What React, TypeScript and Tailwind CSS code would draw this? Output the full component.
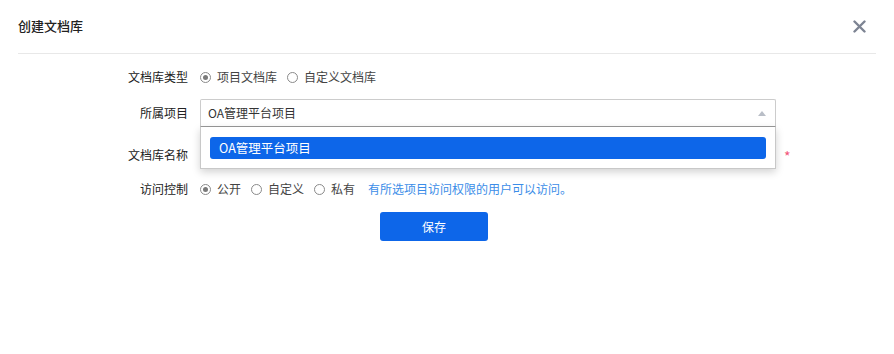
import { useState } from 'react';

const FONT = "font-['Noto_Sans_CJK_SC',sans-serif]";

function Radio({ checked }: { checked?: boolean }) {
  return (
    <span className="w-[11px] h-[11px] rounded-full border border-[#8a8a8a] bg-white flex items-center justify-center shrink-0">
      {checked && <span className="w-[5px] h-[5px] rounded-full bg-[#7a7a7a]" />}
    </span>
  );
}

function RadioItem({ label, checked }: { label: string; checked?: boolean }) {
  return (
    <label className="flex items-center gap-[6px] mr-[10px]">
      <Radio checked={checked} />
      <span>{label}</span>
    </label>
  );
}

function Row({ label, children, className = '' }: { label: string; children: React.ReactNode; className?: string }) {
  return (
    <div className={`flex items-center ${className}`}>
      <div className="w-[188px] text-right text-[#222] shrink-0">{label}</div>
      <div className="ml-[12px] flex items-center">{children}</div>
    </div>
  );
}

export default function App() {
  const [project] = useState('OA管理平台项目');

  return (
    <div className={`w-[894px] h-[354px] bg-white text-[12px] leading-[20px] text-[#444] ${FONT}`}>
      {/* header */}
      <div className="mx-[18px] h-[54px] border-b border-[#e8e8e8] flex items-center justify-between">
        <h1 className="text-[13px] font-medium text-[#222] -mt-[1px]">创建文档库</h1>
        <svg width="13" height="13" viewBox="0 0 13 13" className="mr-[10px] -mt-[1px]">
          <path d="M1.5 1.5 L11.5 11.5 M11.5 1.5 L1.5 11.5" stroke="#7d8493" strokeWidth="2.4" strokeLinecap="round" />
        </svg>
      </div>

      <div className="flex flex-col">
        <Row label="文档库类型" className="mt-[12px] h-[22px]">
          <RadioItem label="项目文档库" checked />
          <RadioItem label="自定义文档库" />
        </Row>

        <Row label="所属项目" className="mt-[11px]">
          <div className="relative">
            <div className="w-[576px] h-[28px] border border-[#cccccc] border-b-[#999] rounded-t-[2px] flex items-center justify-between pl-[7px] pr-[9px] text-[#333]">
              <span>{project}</span>
              <svg width="8" height="5" viewBox="0 0 8 5">
                <path d="M0 5 L4 0 L8 5 Z" fill="#b9bec7" />
              </svg>
            </div>
            <div className="absolute left-0 top-[28px] w-[576px] z-10 bg-white border border-[#c8c8c8] border-t-0 shadow-[0_3px_8px_rgba(0,0,0,0.18)] px-[9px] pt-[10px] pb-[9px]">
              <div className="h-[22px] rounded-[3px] bg-[#0d66e9] text-white flex items-center pl-[9px] text-[12.5px]">
                {project}
              </div>
            </div>
          </div>
        </Row>

        <Row label="文档库名称" className="mt-[14px]">
          <div className="w-[576px] h-[28px] border border-[#cccccc] rounded-[2px]" />
          <span className="ml-[8px] text-[14px] leading-[14px] text-[#f2557a] mt-[2px]">*</span>
        </Row>

        <Row label="访问控制" className="mt-[10px] h-[20px]">
          <RadioItem label="公开" checked />
          <RadioItem label="自定义" />
          <RadioItem label="私有" />
          <span className="ml-[3px] text-[#3b8de8]">有所选项目访问权限的用户可以访问。</span>
        </Row>

        <div className="flex mt-[13px] pl-[380px]">
          <button className="w-[108px] h-[29px] rounded-[3px] bg-[#0d66e9] text-white text-[12px]">保存</button>
        </div>
      </div>
    </div>
  );
}
